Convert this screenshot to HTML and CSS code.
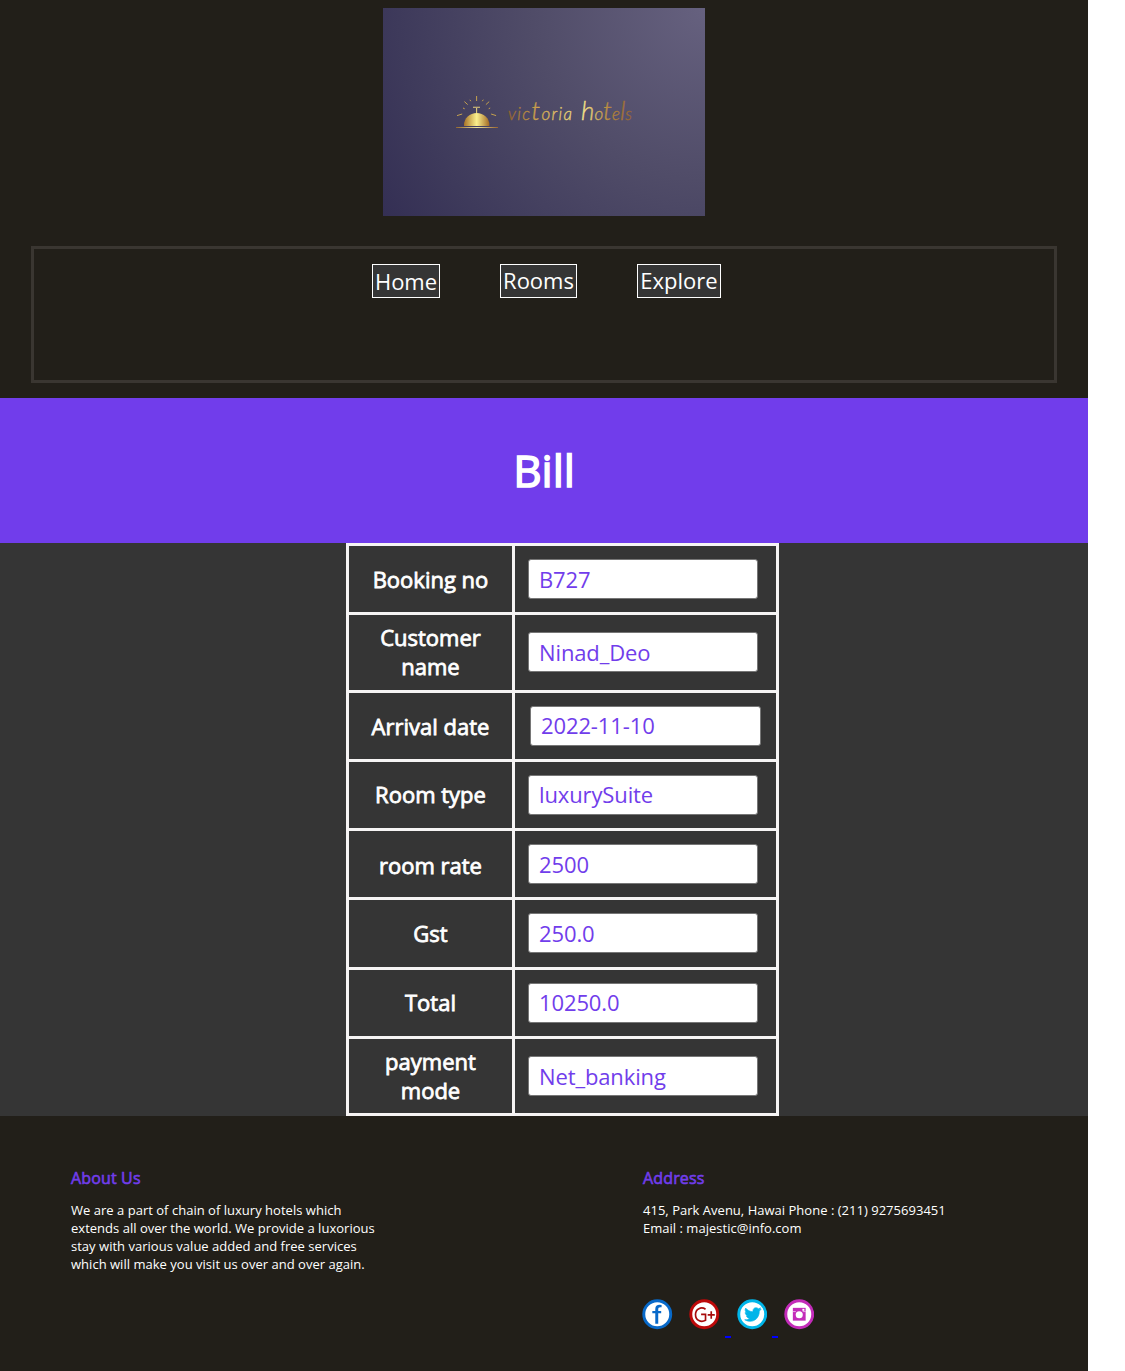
FILE: index.html
```html
<!DOCTYPE html>
<html lang="en">
<head>
<meta charset="utf-8">
<title>Bill - Victoria Hotels</title>
<link rel="stylesheet" href="styles.css">
</head>
<body>
<header class="header">
  <svg class="logo" width="322" height="208" viewBox="0 0 322 208">
    <defs>
      <radialGradient id="sky" gradientUnits="userSpaceOnUse" cx="322" cy="0" r="383">
        <stop offset="0" stop-color="#66617f"/><stop offset=".45" stop-color="#504c68"/><stop offset=".8" stop-color="#3e3a5b"/><stop offset="1" stop-color="#342f54"/>
      </radialGradient>
      <linearGradient id="dome"><stop offset="0" stop-color="#a87428"/><stop offset=".5" stop-color="#fbf08d"/><stop offset="1" stop-color="#a36a25"/></linearGradient>
      <linearGradient id="base" gradientUnits="userSpaceOnUse" x1="73" y1="0" x2="115" y2="0"><stop offset="0" stop-color="#92662f"/><stop offset=".5" stop-color="#eee5a0"/><stop offset="1" stop-color="#98642f"/></linearGradient>
      <linearGradient id="ink" gradientUnits="userSpaceOnUse" x1="125" y1="0" x2="250" y2="0"><stop offset="0" stop-color="#8f6030"/><stop offset=".25" stop-color="#d0a64f"/><stop offset=".6" stop-color="#f5e388"/><stop offset=".8" stop-color="#b8893f"/><stop offset="1" stop-color="#936132"/></linearGradient>
    </defs>
    <rect width="322" height="208" fill="url(#sky)"/>
    <path d="M81 118v-1a12.7 12 0 0 1 25.4 0v1z" fill="url(#dome)"/>
    <path d="M73 118.9h42v1H73z" fill="url(#base)"/>
    <path d="M90 99.3h7M93.6 100v5" stroke="#e2cc7a" stroke-width="1.1" fill="none"/>
    <path d="M93.6 88v5M81.4 93.6l3.3 3M102.9 96.6l3.3-3M74 107.6l5.2-1.6M108.1 106l5 1.6M86.9 91.8l.9 1.4M99.3 93.2l1-1.5M80 100l1.7.8M105.7 100.7l1.5-.7" stroke="#c5a14e" fill="none"/>
    <text class="logo-name" x="125" y="112" textLength="64" lengthAdjust="spacing" fill="url(#ink)" stroke="url(#ink)">vic<tspan class="tall-letter">t</tspan>oria</text>
    <text class="logo-name" x="198" y="112" textLength="51" lengthAdjust="spacing" fill="url(#ink)" stroke="url(#ink)"><tspan class="tall-letter">h</tspan>o<tspan class="tall-letter">t</tspan>e<tspan class="tall-letter">l</tspan>s</text>
  </svg>
  <nav class="nav">
    <a class="nav-link home">Home</a>
    <a class="nav-link rooms">Rooms</a>
    <a class="nav-link explore">Explore</a>
  </nav>
</header>
<main>
  <div class="banner"><h1 class="title">Bill</h1></div>
  <form class="details">
    <div class="bill">
      <label class="label low">Booking no</label><div class="cell"><input class="field" value="B727"></div>
      <label class="label">Customer<br>name</label><div class="cell tall"><input class="field" value="Ninad_Deo"></div>
      <label class="label low">Arrival date</label><div class="cell date"><input class="field raised" value="2022-11-10"></div>
      <label class="label">Room type</label><div class="cell"><input class="field raised" value="luxurySuite"></div>
      <label class="label lower">room rate</label><div class="cell"><input class="field" value="2500"></div>
      <label class="label">Gst</label><div class="cell"><input class="field" value="250.0"></div>
      <label class="label">Total</label><div class="cell"><input class="field raised" value="10250.0"></div>
      <label class="label">payment<br>mode</label><div class="cell tall"><input class="field" value="Net_banking"></div>
    </div>
  </form>
</main>
<footer class="footer">
  <section class="about">
    <h2 class="heading">About Us</h2>
    <p class="copy">We are a part of chain of luxury hotels which<br>extends all over the world. We provide a luxorious<br>stay with various value added and free services<br>which will make you visit us over and over again.</p>
  </section>
  <section class="address">
    <h2 class="heading">Address</h2>
    <p class="copy">415, Park Avenu, Hawai Phone : (211) 9275693451<br>Email : majestic@info.com</p>
    <div class="social">
      <svg class="icon" viewBox="0 0 31 31"><circle cx="15.5" cy="15.5" r="13.7" fill="#fff" stroke="#0869c9" stroke-width="3"/><path d="M13.5 25.2V14.4h-3v-2.2h3v-2c0-3.1 1.7-4.4 4.4-4.4l2 .3v2.4h-1.2c-1.7 0-2.2.8-2.2 2.2v1.5h3v2.2h-3v10.8z" fill="#0869c9"/></svg>
      <span class="gap"></span>
      <svg class="icon" viewBox="0 0 31 31"><circle cx="15.5" cy="15.5" r="13.7" fill="#fff" stroke="#bd0909" stroke-width="3"/><path d="M16.8 10.4c-4.3-2.9-10.2-.5-10.2 5.3 0 6.3 5.8 8.4 10.2 6v-6h-4.5M19 16.2h7.2M22.6 12.4v7.6" fill="none" stroke="#a70b0b" stroke-width="1.7"/></svg>
      <span class="gap dash"></span>
      <svg class="icon" viewBox="0 0 31 31"><circle cx="15.5" cy="15.5" r="13.7" fill="#fff" stroke="#00b5e9" stroke-width="3"/><path d="M24.6 10.3l-2 .6 1.5-1.9-2.3.9c-2.5-2.5-6.3-.5-5.5 3-3 0-5.6-1.4-7.5-3.7-1 1.8-.5 3.7 1.1 4.8l-1.6-.4c0 1.8 1.2 3.2 2.9 3.5l-1.6.1c.5 1.4 1.7 2.3 3.3 2.4-1.4 1.2-3.2 1.7-5.1 1.5 7.1 4.3 15.1-.3 14.9-8.8z" fill="#00b5e9" stroke="#00b5e9" stroke-width=".6"/></svg>
      <span class="gap dash"></span>
      <svg class="icon" viewBox="0 0 31 31"><circle cx="15.5" cy="15.5" r="13.7" fill="#fff" stroke="#c32bb9" stroke-width="3"/><path d="M9 9h13v13H9z" fill="#c32bb9"/><circle cx="15.5" cy="16" r="3.6" fill="#fff"/><path d="M9 12.8h3M19 12.8h3" stroke="#fff" stroke-width=".6"/><path d="M18.7 10h2v2h-2z" fill="#fff"/></svg>
    </div>
  </section>
</footer>
</body>
</html>
```

FILE: styles.css
```css
* { box-sizing: border-box; }
html { background: #fff; }
body { margin: 0; width: 1088px; font-family: "Open Sans", sans-serif; color: #fff; }
.header { height: 398px; padding: 8px 31px 0; background: #221f19; }
.logo { display: block; margin: 0 auto 30px; }
.logo-name { font: italic 300 17px "Lato", sans-serif; stroke-width: .35px; }
.tall-letter { font-size: 26px; }
.nav { height: 137px; border: 3px solid #3a3631; padding: 15px 0 0 338px; display: flex; gap: 60px; align-items: flex-start; }
.nav-link { height: 34px; border: 1px solid #fff; background: #353535; font-size: 22px; line-height: 30px; text-align: center; white-space: nowrap; }
.home { width: 68px; padding-top: 1px; }
.rooms { width: 77px; }
.explore { width: 84px; }
.banner { height: 145px; background: #713deb; display: flex; justify-content: center; }
.title { margin: 0; font-size: 44px; line-height: 145px; font-weight: 400; -webkit-text-stroke: 1.5px #fff; }
.details { height: 573px; background: #353535; padding-left: 346px; }
.bill { width: 433px; height: 573px; padding: 3px; background: #f6f4f4; display: grid; gap: 3px; grid-template-columns: 163px 261px; grid-template-rows: 66px 75px 66px 66px 66px 67px 66px 74px; }
.label, .cell { background: #353535; }
.label { display: grid; place-content: center; text-align: center; font-size: 22px; line-height: 29px; -webkit-text-stroke: .8px #fff; padding-bottom: 1px; }
.low { padding: 1px 0 0; }
.lower { padding: 3px 0 0; }
.cell { padding: 13px 0 0 13px; }
.tall { padding-top: 17px; }
.date { padding-left: 15px; }
.field { display: block; width: 230px; height: 40px; border: 1px solid #767676; border-radius: 3px; padding: 1px 10px; font: 400 22px "Open Sans", sans-serif; letter-spacing: -.12px; color: #713deb; background: #fff; }
.raised { padding: 0 10px 2px; }
.date .field { width: 231px; }
.footer { height: 255px; padding: 50px 0 0 71px; background: #221f19; display: grid; grid-template-columns: 572px 1fr; }
.heading { margin: 0 0 11px; font-size: 16px; line-height: 24px; letter-spacing: .15px; font-weight: 400; color: #713deb; -webkit-text-stroke: .6px #713deb; }
.copy { margin: 0; font-size: 13px; line-height: 18px; letter-spacing: .02px; }
.social { display: flex; margin: 62px 0 0 -1px; }
.icon { width: 30.5px; height: 30.5px; display: block; }
.gap { width: 16.8px; height: 39px; }
.dash { background: linear-gradient(#00f, #00f) 5px 37px / 6px 2px no-repeat; }
```
